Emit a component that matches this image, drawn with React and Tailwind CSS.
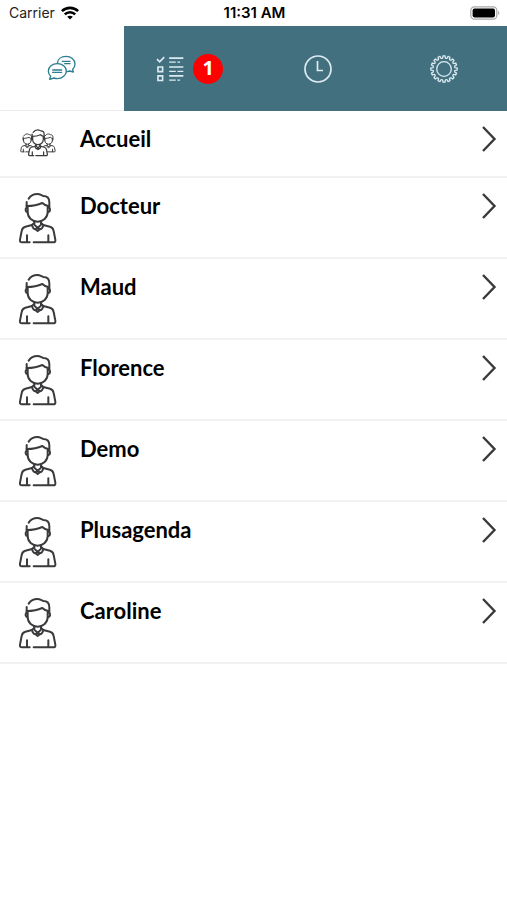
import React from "react";

const contacts = [
  "Docteur",
  "Maud",
  "Florence",
  "Demo",
  "Plusagenda",
  "Caroline",
];

function PersonShape({ strokeWidth = 6, fill = "none" }) {
  return (
    <g
      fill="none"
      stroke="#3b3b3d"
      strokeWidth={strokeWidth}
      strokeLinecap="round"
      strokeLinejoin="round"
    >
      <path
        fill={fill}
        stroke="none"
        d="M80 60Q90 42 110 43Q146 48 148 76L142 108L124 128L161 146L166 190H60L66 146L103 128L84 108Z"
      />
      <path d="M86 57C92 48 102 43 112 43C120 43 124 47 130 49C142 49 148 57 148 68V84" />
      <path d="M80 67V86" />
      <path d="M80 79C98 79 114 76 127 70C133 76 140 79 147 80" />
      <path d="M83 82V98C83 114 97 126 113 126S143 114 143 98V82" />
      <path d="M80 85C75 86 76 96 82 97M147 85C152 86 151 96 145 97" />
      <path d="M103 125V135L113 145L123 135V125" />
      <path d="M101 131L96 136C98 145 103 149 107 149L113 145L119 149C123 149 128 145 130 136L125 131" />
      <path d="M107 149L113 154L119 149" />
      <path d="M96 136L76 141C69 143 66 148 65 154L60 180C59 186 61 188 66 188H89" />
      <path d="M101 188H159C165 188 167 186 166 180L161 154C160 148 157 143 150 141L130 136" />
      <path d="M81 167V187M145 167V187" />
    </g>
  );
}

function PersonIcon() {
  return (
    <svg viewBox="57 37 114 159" className="h-[53px] w-[38px]" aria-hidden="true">
      <PersonShape />
    </svg>
  );
}

function GroupIcon() {
  return (
    <svg viewBox="57 28 114 99" className="h-[33px] w-[38px]" aria-hidden="true">
      <g transform="translate(40 39) scale(.37)">
        <PersonShape strokeWidth={8} />
      </g>
      <g transform="translate(104 39) scale(.37)">
        <PersonShape strokeWidth={8} />
      </g>
      <g transform="translate(54 20) scale(.53)">
        <PersonShape strokeWidth={7} fill="#fff" />
      </g>
    </svg>
  );
}

function ChatIcon() {
  return (
    <svg
      viewBox="144 165 90 78"
      className="h-[26px] w-[30px]"
      fill="none"
      stroke="#2c7d8f"
      strokeWidth="4"
      strokeLinecap="round"
      strokeLinejoin="round"
      aria-hidden="true"
    >
      <path d="M175 190C176 177 187 169 201 169C216 169 228 179 228 192C228 198 225 204 221 208L223 216L212 213C209 214 206 215 203 215" />
      <path d="M155 228C150 224 148 219 148 213C148 201 160 191 175 191S202 201 202 213S190 236 175 236C171 236 168 235 165 234L152 238Z" />
      <path d="M190 184H213M197 191H213M161 210H188M161 217H188" strokeWidth="4" />
    </svg>
  );
}

function TasksIcon() {
  return (
    <svg
      viewBox="48 42 88 84"
      className="h-[28px] w-[29px]"
      fill="none"
      stroke="#dcebf2"
      strokeWidth="5"
      aria-hidden="true"
    >
      <path d="M51 54L59 62L73 48" />
      <path d="M54 78H68V92H54ZM54 105H68V119H54Z" />
      <path d="M88 51H131M88 78H131M88 105H131" />
      <path d="M88 63H108M113 63H121M88 91H108M113 91H131M88 118H108M113 118H121" strokeWidth="4" />
    </svg>
  );
}

function ClockIcon() {
  return (
    <svg
      viewBox="0 0 28 28"
      className="size-7"
      fill="none"
      stroke="#dcebf2"
      strokeWidth="1.7"
      aria-hidden="true"
    >
      <circle cx="14" cy="14" r="13" />
      <path d="M13.5 6V15.5H19" />
    </svg>
  );
}

// 16 rounded teeth around the inner ring
const gearTeeth = Array.from({ length: 16 }, (_, i) => {
  const point = (step, r) => {
    const a = ((i + step) * Math.PI) / 8;
    return `${(14 + r * Math.sin(a)).toFixed(2)} ${(14 - r * Math.cos(a)).toFixed(2)}`;
  };
  return `${i === 0 ? "M" : "L"}${point(-0.2, 13.2)}L${point(0.2, 13.2)}L${point(0.3, 11.2)}Q${point(0.5, 10.4)} ${point(0.7, 11.2)}`;
}).join("");

function GearIcon() {
  return (
    <svg
      viewBox="0 0 28 28"
      className="size-7"
      fill="none"
      stroke="#dcebf2"
      strokeWidth="1.3"
      strokeLinejoin="round"
      aria-hidden="true"
    >
      <path d={`${gearTeeth}Z`} />
      <circle cx="14" cy="14" r="7.3" />
    </svg>
  );
}

function WifiIcon() {
  return (
    <svg viewBox="0 0 18 14" className="h-[14px] w-[18px]" fill="none" stroke="#000" strokeWidth="2.6" aria-hidden="true">
      <path d="M0.9 5.2C5.4 0.7 12.6 0.7 17.1 5.2" />
      <path d="M3.8 8.4C6.7 5.5 11.3 5.5 14.2 8.4" />
      <path d="M9 13.6L6.2 10.8C7.8 9.3 10.2 9.3 11.8 10.8Z" fill="#000" stroke="none" />
    </svg>
  );
}

function BatteryIcon() {
  return (
    <svg viewBox="0 0 30 14" className="h-[14px] w-[30px]" aria-hidden="true">
      <rect x="0.8" y="0.8" width="26" height="12.4" rx="3.6" fill="#fff" stroke="#a8a8a8" strokeWidth="1.2" />
      <rect x="2.6" y="2.6" width="22.4" height="8.8" rx="1.8" fill="#000" />
      <path d="M28.2 4.8C29.8 5.6 29.8 8.4 28.2 9.2Z" fill="#a8a8a8" />
    </svg>
  );
}

function StatusBar() {
  return (
    <div className="grid h-[26px] grid-cols-3 items-center pr-[7px] pl-[9px] font-['Inter',sans-serif] text-sm text-black">
      <div className="flex items-center gap-[6px]">
        <span className="text-[#222]">Carrier</span>
        <WifiIcon />
      </div>
      <span className="text-center text-[15px] font-semibold whitespace-nowrap">11:31 AM</span>
      <div className="flex justify-end">
        <BatteryIcon />
      </div>
    </div>
  );
}

function TabBar() {
  return (
    <nav className="flex h-[85px]">
      <button
        type="button"
        aria-label="Messages"
        className="flex w-[124px] shrink-0 items-center justify-center border-b border-[#ececec] bg-white"
      >
        <ChatIcon />
      </button>
      <div className="grid flex-1 grid-cols-3 bg-[#43707f] pl-[6px]">
        <button type="button" aria-label="Tâches" className="flex items-center justify-center gap-2 pr-[6px]">
          <TasksIcon />
          <span className="flex size-[30px] items-center justify-center rounded-full bg-[#fe0000] pb-[2px] font-['Noto_Sans',sans-serif] text-xl font-bold text-white">
            1
          </span>
        </button>
        <button type="button" aria-label="Historique" className="flex items-center justify-center">
          <ClockIcon />
        </button>
        <button type="button" aria-label="Réglages" className="flex items-center justify-center">
          <GearIcon />
        </button>
      </div>
    </nav>
  );
}

function ContactRow({ name, icon, className }) {
  return (
    <li className={`border-b-2 border-[#f2f2f2] ${className}`}>
      <a href="#" className="flex h-full items-start pt-[14px] pr-[10px] pl-[19px]">
        <span className="w-[61px] shrink-0">{icon}</span>
        <span className="flex-1 text-[22px] leading-[28px] font-bold text-black">{name}</span>
        <svg
          viewBox="0 0 16 28"
          className="h-[28px] w-[16px]"
          fill="none"
          stroke="#3a3a3a"
          strokeWidth="2.4"
          aria-hidden="true"
        >
          <path d="M2 2L13.5 14L2 26" />
        </svg>
      </a>
    </li>
  );
}

export default function App() {
  return (
    <div className="min-h-screen bg-white font-['Lato',sans-serif]">
      <StatusBar />
      <TabBar />
      <ul>
        <ContactRow name="Accueil" icon={<GroupIcon />} className="h-[67px]" />
        {contacts.map((name) => (
          <ContactRow key={name} name={name} icon={<PersonIcon />} className="h-[81px]" />
        ))}
      </ul>
    </div>
  );
}
